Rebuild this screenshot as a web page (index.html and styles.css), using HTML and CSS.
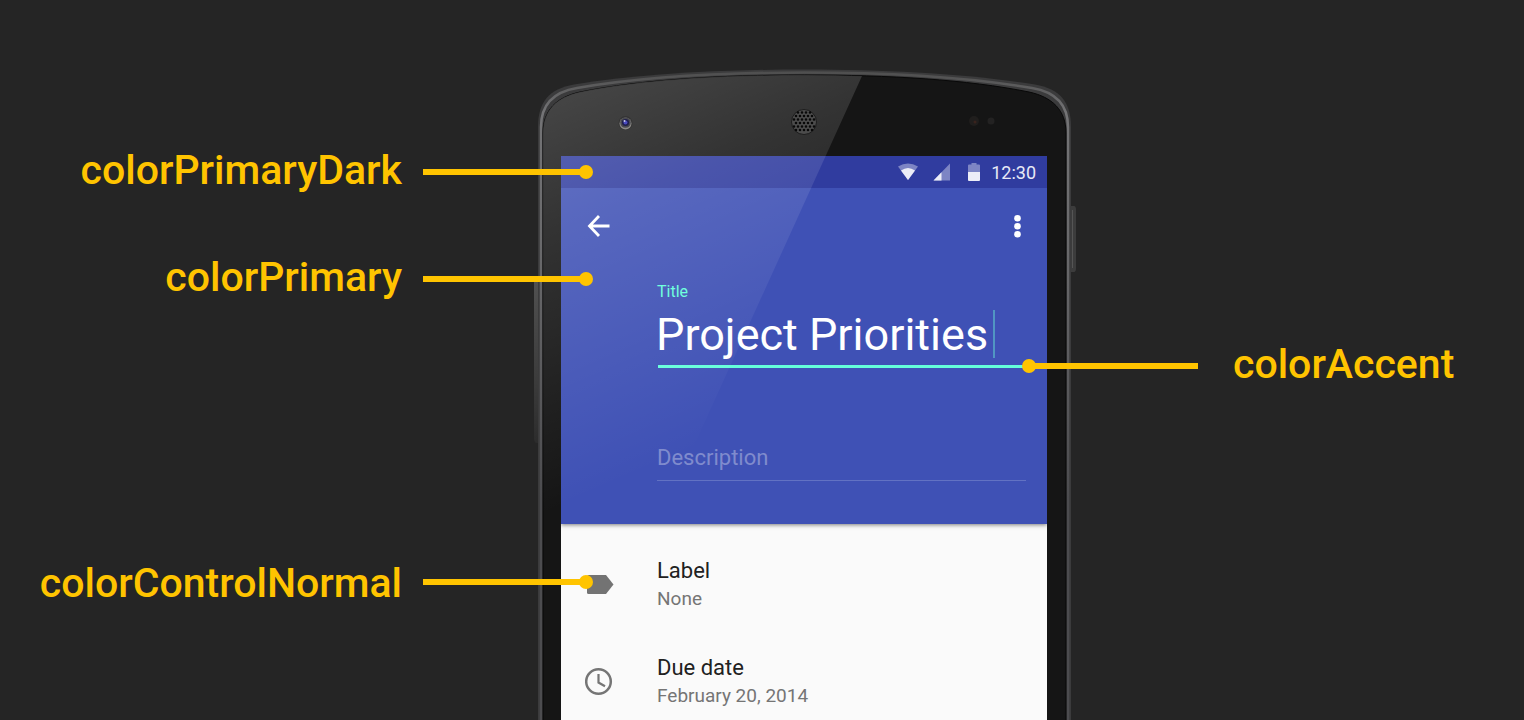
FILE: index.html
```
<!DOCTYPE html>
<html lang="en">
<head>
<meta charset="utf-8">
<title>Theme colors</title>
<link rel="stylesheet" href="styles.css">
</head>
<body>
<main class="stage">
  <section class="callouts callouts-left">
    <div class="callout callout-dark"><span class="name">colorPrimaryDark</span><span class="leader"></span></div>
    <div class="callout callout-primary"><span class="name">colorPrimary</span><span class="leader"></span></div>
    <div class="callout callout-control"><span class="name">colorControlNormal</span><span class="leader"></span></div>
  </section>

  <section class="phone">
    <svg class="frame" width="542" height="1000" viewBox="534 0 542 1000" aria-hidden="true">
      <defs>
        <linearGradient id="rim" x1="0" x2="0" y1="69" y2="500" gradientUnits="userSpaceOnUse">
          <stop offset="0" stop-color="#4c4c4c"/><stop offset=".1" stop-color="#747476"/><stop offset=".4" stop-color="#6a6a6c"/><stop offset="1" stop-color="#4c4c4f"/>
        </linearGradient>
        <linearGradient id="rocker" x1="0" x2="0" y1="282" y2="443" gradientUnits="userSpaceOnUse">
          <stop offset="0" stop-color="#505050"/><stop offset=".6" stop-color="#3c3c3c"/><stop offset="1" stop-color="#2c2c2c"/>
        </linearGradient>
      </defs>
      <path d="M539 282h-5v156q0 5 3 5h2z" fill="url(#rocker)"/>
      <path d="M1070 206h4q2 0 2 4v58q0 4-2 4h-4z" fill="#3c3c3c"/>
      <path d="M1072 210h1v58h-1z" fill="#555"/>
      <path d="M538 1000V127C538 102 549 89 574 84.500C640 74 720 69.500 804.500 69.500S969 74 1035 84.500C1060 89 1071 102 1071 127V1000z" fill="#3b3b3c"/>
      <path d="M541 1000V127C541 105 553 92 577 88C642 77 720 72.500 804.500 72.500S967 77 1032 88C1056 92 1068 105 1068 127V1000" fill="none" stroke="url(#rim)" stroke-width="2.500"/>
      <path d="M543 1000V133C543 110 557 97 580 92C642 79.500 720 75 804.500 75S967 79.500 1029 92C1052 97 1066 110 1066 133V1000z" fill="#151515" stroke="#080808"/>
      <circle cx="974" cy="121" r="5" fill="#201e1d"/><circle cx="975" cy="122" r="1.500" fill="#39231d"/><circle cx="991" cy="121" r="3.500" fill="#232222"/>
    </svg>

    <div class="screen">
      <header class="hero">
        <div class="status">
          <svg width="20" height="18" viewBox="0 0 20 18" aria-hidden="true"><path d="M0 3.500Q10-2.500 20 3.500L10 17z" fill="#7d85c4"/><path d="M3 7.500Q10 2.500 17 7.500L10 17z" fill="#ecedf7"/></svg>
          <svg width="18" height="18" viewBox="0 0 18 18" aria-hidden="true"><path d="M17 .5V17.500H.5z" fill="#7d85c4"/><path d="M8.500 9.300v8.200H.5z" fill="#ecedf7"/></svg>
          <svg width="12" height="18" viewBox="0 0 12 18" aria-hidden="true"><path d="M3.500 0h5v1.500H11q1 0 1 1V9H0V2.500q0-1 1-1h2.500z" fill="#7d85c4"/><path d="M0 9h12v8q0 1-1 1H1q-1 0-1-1z" fill="#ecedf7"/></svg>
          <time>12:30</time>
        </div>
        <nav class="toolbar">
          <button type="button" aria-label="Back"><svg width="32" height="32" viewBox="0 0 32 32"><path d="M26.500 16H7M16 6 6.500 16 16 26" fill="none" stroke="#fff" stroke-width="2.800"/></svg></button>
          <button type="button" aria-label="More options"><svg width="32" height="32" viewBox="0 0 32 32" fill="#fff"><circle cx="16.500" cy="8.300" r="3.300"/><circle cx="16.500" cy="16.300" r="3.300"/><circle cx="16.500" cy="24.300" r="3.300"/></svg></button>
        </nav>
        <form class="form">
          <label class="title-label" for="title">Title</label>
          <div class="title-field"><input id="title" type="text" value="Project Priorities"><span class="caret"></span></div>
          <input class="description" type="text" placeholder="Description" aria-label="Description">
        </form>
      </header>
      <ul class="details">
        <li>
          <svg width="30" height="30" viewBox="0 0 30 30" aria-hidden="true"><path d="M3.500 5H21L28.500 14.500 21 24H3.500Q2 24 2 22.500V6.500Q2 5 3.500 5z" fill="#737373"/></svg>
          <div><div class="primary">Label</div><div class="secondary">None</div></div>
        </li>
        <li>
          <svg width="30" height="30" viewBox="0 0 30 30" fill="none" stroke="#757575" aria-hidden="true"><circle cx="13.500" cy="14.500" r="12.300" stroke-width="2.500"/><path d="M13.500 7V15.500l6.500 3.700" stroke-width="2.200"/></svg>
          <div><div class="primary">Due date</div><div class="secondary">February 20, 2014</div></div>
        </li>
      </ul>
    </div>

    <svg class="frame gloss" width="542" height="1000" viewBox="534 0 542 1000" aria-hidden="true">
      <defs>
        <linearGradient id="shine" x1="540" y1="80" x2="700" y2="448" gradientUnits="userSpaceOnUse">
          <stop offset="0" stop-color="#fff" stop-opacity=".22"/><stop offset=".35" stop-color="#fff" stop-opacity=".13"/><stop offset="1" stop-color="#fff" stop-opacity="0"/>
        </linearGradient>
      </defs>
      <path d="M543 560V133C543 110 557 97 580 92C642 79.500 720 75 804.500 75Q834 75 862 76L642 560z" fill="url(#shine)"/>
      <circle cx="625.500" cy="123" r="7" fill="#343434"/><circle cx="625.500" cy="123.500" r="6" fill="#8c8a86"/><circle cx="625.500" cy="122.500" r="5.300" fill="#4a4a50"/><circle cx="625.500" cy="122.500" r="3.600" fill="#20204e"/><circle cx="625.500" cy="122.500" r="2" fill="#4a4ac0"/><circle cx="624.500" cy="121" r="1" fill="#c8c8e8"/>
      <circle cx="804" cy="122" r="12.500" fill="#4c4c4c" stroke="#1c1c1c"/>
      <g fill="none" stroke="#080808" stroke-width="2.600" stroke-linecap="round">
        <path stroke-dasharray="0 4" d="M798 112.500h13M796 116h17M794 119.500h21M796 123h17M794 126.500h21M796 130h17"/>
      </g>
    </svg>
  </section>

  <section class="callouts callouts-right">
    <div class="callout callout-accent"><span class="leader"></span><span class="name">colorAccent</span></div>
  </section>
</main>
</body>
</html>
```
FILE: styles.css
```
* { box-sizing: border-box; }
body {
  margin: 0;
  background: #252525;
  font-family: Roboto, "Liberation Sans", sans-serif;
}
.stage {
  display: grid;
  grid-template-columns: 534fr 542px 448fr;
  min-height: 100vh;
  overflow: hidden;
}

/* callouts */
.callouts { position: relative; z-index: 2; color: #ffc400; }
.callouts-left { margin-right: -59px; }
.callouts-right { margin-left: -54px; }
.callout { display: flex; align-items: center; height: 48px; }
.callouts-left .callout { justify-content: flex-end; gap: 21px; }
.callouts-right .callout { gap: 35px; }
.callout-dark { margin-top: 148px; }
.callout-primary { margin-top: 59px; }
.callout-control { margin-top: 255px; }
.callout-accent { margin-top: 342px; }
.name {
  font-size: 41px;
  font-weight: 500;
  line-height: 48px;
  padding-bottom: 4px;
}
.callout-control .name { padding: 2px 0 0; }
.leader {
  display: flex;
  align-items: center;
  flex: none;
  width: 170px;
  height: 6px;
  background: linear-gradient(#ffc400, #ffc400) content-box;
}
.callouts-left .leader { justify-content: flex-end; padding-right: 6px; }
.callouts-right .leader { width: 176px; padding-left: 6px; }
.leader::after {
  content: "";
  flex: none;
  width: 14px;
  height: 14px;
  border-radius: 50%;
  background: #ffc400;
}
.callouts-left .leader::after { margin-right: -6px; }
.callouts-right .leader::after { margin-left: -6px; }

/* phone */
.phone {
  position: relative;
  display: flex;
  padding: 156px 29px 0 27px;
  height: 100vh;
  min-height: 720px;
}
.frame { position: absolute; top: 0; left: 0; }
.gloss { pointer-events: none; }
.screen { position: relative; flex: 1; background: #fafafa; overflow: hidden; }
.hero {
  background: #3f51b5;
  padding-bottom: 43px;
  box-shadow: 0 1px 4px rgba(0, 0, 0, .5);
}
.status {
  display: flex;
  align-items: center;
  justify-content: flex-end;
  height: 32px;
  padding-right: 11px;
  background: #303c9f;
  color: #e8e9f6;
}
.status svg { margin-right: 15px; }
.status svg:nth-of-type(2) { margin-right: 17px; }
.status svg:nth-of-type(3) { margin-right: 11px; }
.status time { font-size: 18px; line-height: 32px; padding-top: 2px; }
.toolbar {
  display: flex;
  align-items: center;
  justify-content: space-between;
  height: 76px;
  padding: 0 14px 0 22px;
}
.toolbar button { display: flex; padding: 0; border: 0; background: none; }
.form { display: flex; flex-direction: column; padding: 18px 18px 0 96px; }
.form input {
  padding: 0;
  border: 0;
  outline: 0;
  background: none;
  color: #fff;
  font-family: inherit;
}
.title-label { font-size: 16px; line-height: 20px; color: #64ffda; }
.title-field {
  display: flex;
  align-items: center;
  margin: 4px 0 0 1px;
  padding-bottom: 3px;
  border-bottom: 3px solid #64ffda;
}
.title-field input { width: 337px; height: 56px; margin-left: -2px; font-size: 45px; }
.caret { width: 2px; height: 48px; background: #5196c3; }
.form .description {
  height: 38px;
  margin: 75px 3px 0 0;
  padding-bottom: 9px;
  border-bottom: 1px solid #6272c3;
  font-size: 22px;
}
.description::placeholder { color: #7f8bcd; opacity: 1; }
.details {
  display: flex;
  flex-direction: column;
  gap: 41px;
  margin: 0;
  padding: 33px 18px 43px 24px;
  list-style: none;
}
.details li { display: flex; align-items: center; gap: 42px; }
.details svg { flex: none; }
.primary { font-size: 22px; line-height: 28px; color: #212121; }
.secondary { font-size: 19px; line-height: 28px; color: #757575; }
```
